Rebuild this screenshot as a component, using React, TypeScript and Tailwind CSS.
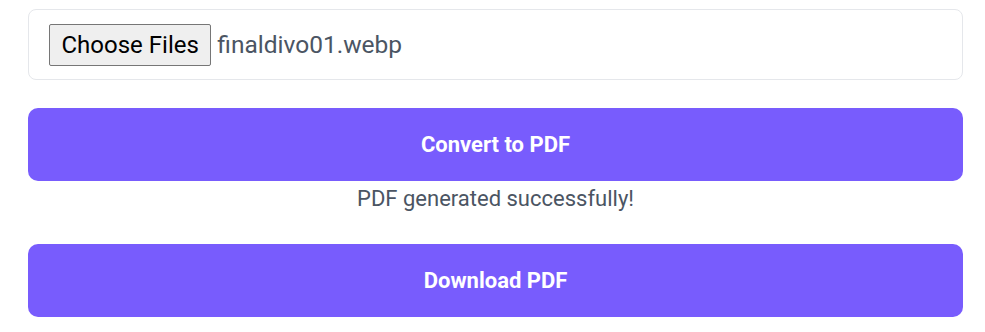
export default function App() {
  return (
    <div className="min-h-screen bg-white font-['Roboto',sans-serif]">
      <div className="w-[963px] pl-[28px] pt-[9px]">
        {/* File picker */}
        <div className="flex items-center border border-[#e5e7eb] rounded-lg px-5 pt-[14px] pb-[13px]">
          <button className="h-[42px] px-[11.5px] bg-[#efefef] border border-[#767676] rounded-[2px] text-[24px] leading-none text-black">
            Choose Files
          </button>
          <span className="ml-[6px] text-[24.5px] leading-none text-[#4b5563]">finaldivo01.webp</span>
        </div>

        <button className="mt-[28px] w-full h-[73px] rounded-[10px] bg-[#785cfd] text-white text-[22px] font-bold">
          Convert to PDF
        </button>
        <p className="mt-[4px] text-center text-[22px] leading-7 text-[#4b5563]">PDF generated successfully!</p>

        <button className="mt-[31px] w-full h-[73px] rounded-[10px] bg-[#785cfd] text-white text-[22px] font-bold">
          Download PDF
        </button>
      </div>
    </div>
  );
}
